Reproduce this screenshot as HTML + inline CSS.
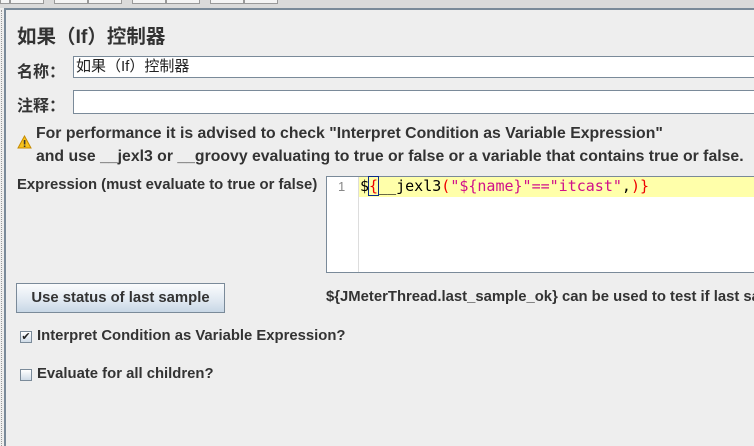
<!DOCTYPE html><html><head><style>
body{margin:0;width:754px;height:446px;background:#eeeeee;position:relative;overflow:hidden;font-family:"Liberation Sans","Noto Sans CJK SC",sans-serif;color:#333}
.a{position:absolute}
.tb{top:0;height:3px;border:1px solid #999;border-top:none;background:#f4f4f4}
.b{font-weight:bold;font-size:14.85px}
.inp{background:#fff;border:1px solid #7a8a99;height:22px;box-sizing:border-box}
.cb{width:12px;height:12px;border:1px solid #7a8a99;background:linear-gradient(#fff,#cfdbe7);box-sizing:border-box}
</style></head><body>
<div class="a" style="left:0;top:0;width:754px;height:8px;background:#dadada"></div>
<div class="a tb" style="left:0;width:8px"></div>
<div class="a tb" style="left:10px;width:32px"></div>
<div class="a tb" style="left:54px;width:32px"></div>
<div class="a tb" style="left:88px;width:32px"></div>
<div class="a tb" style="left:132px;width:32px"></div>
<div class="a tb" style="left:166px;width:32px"></div>
<div class="a tb" style="left:210px;width:32px"></div>
<div class="a tb" style="left:244px;width:32px"></div>
<div class="a" style="left:4px;top:8px;width:750px;height:2px;background:#7a8a99"></div>
<div class="a" style="left:4px;top:8px;width:2px;height:438px;background:#7a8a99"></div>
<div class="a" style="left:1px;top:10px;width:0;height:436px;border-left:1px dotted #999"></div>
<div class="a" style="left:17px;top:20px;font-size:19.5px;font-weight:bold;color:#333">如果（If）控制器</div>
<div class="a b" style="left:17px;top:58px;font-size:16px">名称：</div>
<div class="a inp" style="left:73px;top:56px;width:690px;font-size:15px;padding:2px 2px;line-height:16px;color:#222">如果（If）控制器</div>
<div class="a b" style="left:17px;top:92px;font-size:16px">注释：</div>
<div class="a inp" style="left:73px;top:90px;width:690px;height:24px"></div>
<svg class="a" style="left:17px;top:135px" width="15" height="14" viewBox="0 0 15 14"><polygon points="7.5,1 14,13 1,13" fill="#f7c21b" stroke="#c58a00"/><rect x="6.8" y="5" width="1.6" height="4.5" fill="#333"/><rect x="6.8" y="10.5" width="1.6" height="1.5" fill="#333"/></svg>
<div class="a b" style="left:36px;top:122px;line-height:23px;font-size:15.8px;white-space:nowrap">For performance it is advised to check "Interpret Condition as Variable Expression"<br>and use __jexl3 or __groovy evaluating to true or false or a variable that contains true or false.</div>
<div class="a b" style="left:17px;top:177px">Expression (must evaluate to true or false)</div>
<div class="a" style="left:326px;top:176px;width:428px;height:97px;background:#fff;border:1px solid #7a8a99;border-right:none;box-sizing:border-box"></div>
<div class="a" style="left:358px;top:177px;width:1px;height:95px;background:#ddd"></div>
<div class="a" style="left:359px;top:177px;width:395px;height:20px;background:#ffffaa"></div>
<div class="a" style="left:338px;top:179px;font-size:13px;color:#888">1</div>
<div class="a" style="left:360px;top:177px;font-family:'DejaVu Sans Mono',monospace;font-size:15px;white-space:nowrap;color:#000">$<span style="color:#e00;outline:1px solid #0b2a8a">{</span>__jexl3<span style="color:#e00">(</span><span style="color:#d0108a">"${name}"=="itcast"</span>,<span style="color:#e00">)}</span></div>
<div class="a" style="left:16px;top:283px;width:209px;height:30px;border:1px solid #7a8a99;box-sizing:border-box;background:linear-gradient(#fbfcfd,#dfe8f1 60%,#c8d7e6);font-weight:bold;font-size:14.85px;text-align:center;line-height:28px">Use status of last sample</div>
<div class="a" style="left:326px;top:289px;width:428px;overflow:hidden"><div class="b" style="white-space:nowrap">${JMeterThread.last_sample_ok} can be used to test if last sample</div></div>
<div class="a cb" style="left:20px;top:331px;font-size:11px;line-height:10px;text-align:center;color:#222">✔</div>
<div class="a b" style="left:37px;top:328px">Interpret Condition as Variable Expression?</div>
<div class="a cb" style="left:20px;top:369px"></div>
<div class="a b" style="left:37px;top:366px">Evaluate for all children?</div>
</body></html>
